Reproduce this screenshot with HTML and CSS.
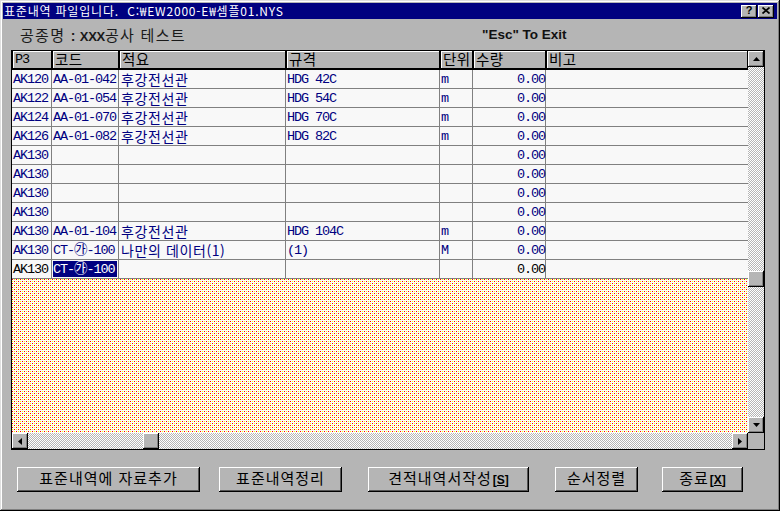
FILE: index.html
```html
<!DOCTYPE html>
<html lang="ko">
<head>
<meta charset="utf-8">
<title>표준내역</title>
<link rel="stylesheet" href="styles.css">
</head>
<body>
<div class="window">
  <div class="titlebar">
    <span class="title">표준내역 파일입니다.&nbsp;&nbsp;C:₩EW2000-E₩셈플01.NYS</span>
    <div class="tbtns">
      <span class="tbtn help">?</span>
      <span class="tbtn"><svg width="8" height="7" viewBox="0 0 8 7"><path d="M0.5 0.5L7.5 6.5M7.5 0.5L0.5 6.5" stroke="#000" stroke-width="1.7"/></svg></span>
    </div>
  </div>

  <div class="info">
    <span class="job">공종명 <b class="colon">:</b><b class="xxx">XXX</b>공사 테스트</span>
    <span class="esc">"Esc" To Exit</span>
  </div>

  <div class="grid">
    <div class="gmain">
      <div class="table">
        <div class="hdr cols">
          <div>P3</div><div class="ko">코드</div><div class="ko">적요</div><div class="ko">규격</div><div class="ko">단위</div><div class="ko">수량</div><div class="ko">비고</div>
        </div>
        <div class="row cols">
          <div>AK120</div><div>AA-01-042</div><div class="ko">후강전선관</div><div>HDG 42C</div><div>m</div><div class="num">0.00</div><div></div>
        </div>
        <div class="row cols">
          <div>AK122</div><div>AA-01-054</div><div class="ko">후강전선관</div><div>HDG 54C</div><div>m</div><div class="num">0.00</div><div></div>
        </div>
        <div class="row cols">
          <div>AK124</div><div>AA-01-070</div><div class="ko">후강전선관</div><div>HDG 70C</div><div>m</div><div class="num">0.00</div><div></div>
        </div>
        <div class="row cols">
          <div>AK126</div><div>AA-01-082</div><div class="ko">후강전선관</div><div>HDG 82C</div><div>m</div><div class="num">0.00</div><div></div>
        </div>
        <div class="row cols">
          <div>AK130</div><div></div><div></div><div></div><div></div><div class="num">0.00</div><div></div>
        </div>
        <div class="row cols">
          <div>AK130</div><div></div><div></div><div></div><div></div><div class="num">0.00</div><div></div>
        </div>
        <div class="row cols">
          <div>AK130</div><div></div><div></div><div></div><div></div><div class="num">0.00</div><div></div>
        </div>
        <div class="row cols">
          <div>AK130</div><div></div><div></div><div></div><div></div><div class="num">0.00</div><div></div>
        </div>
        <div class="row cols">
          <div>AK130</div><div>AA-01-104</div><div class="ko">후강전선관</div><div>HDG 104C</div><div>m</div><div class="num">0.00</div><div></div>
        </div>
        <div class="row cols">
          <div>AK130</div><div>CT-㉮-100</div><div class="ko">나만의 데이터(1)</div><div>(1)</div><div>M</div><div class="num">0.00</div><div></div>
        </div>
        <div class="row cols newrow">
          <div>AK130</div><div class="sel"><span>CT-㉮-100</span></div><div></div><div></div><div></div><div class="num">0.00</div><div></div>
        </div>
        <div class="fill"></div>
      </div>
      <div class="vscroll">
        <div class="sbtn"><svg width="7" height="4" viewBox="0 0 7 4"><path d="M3.5 0L7 4H0Z" fill="#000"/></svg></div>
        <div class="track vtop"></div>
        <div class="thumb"></div>
        <div class="track grow"></div>
        <div class="sbtn"><svg width="7" height="4" viewBox="0 0 7 4"><path d="M0 0H7L3.5 4Z" fill="#000"/></svg></div>
      </div>
    </div>
    <div class="gfoot">
      <div class="hscroll">
        <div class="sbtn"><svg width="4" height="7" viewBox="0 0 4 7"><path d="M0 3.5L4 0V7Z" fill="#000"/></svg></div>
        <div class="track hleft"></div>
        <div class="thumb"></div>
        <div class="track grow"></div>
        <div class="sbtn"><svg width="4" height="7" viewBox="0 0 4 7"><path d="M0 0L4 3.5L0 7Z" fill="#000"/></svg></div>
      </div>
      <div class="corner"></div>
    </div>
  </div>

  <div class="buttons">
    <div class="btn b1">표준내역에 자료추가</div>
    <div class="btn b2">표준내역정리</div>
    <div class="btn b3">견적내역서작성<b class="acc">[<u>S</u>]</b></div>
    <div class="btn b4">순서정렬</div>
    <div class="btn b5">종료<b class="acc">[<u>X</u>]</b></div>
  </div>
</div>
</body>
</html>
```

FILE: styles.css
```css
* { box-sizing: border-box; }
html, body { margin: 0; padding: 0; }
body {
  width: 780px;
  height: 511px;
  overflow: hidden;
  background: #b5b5b5;
  font-family: "Noto Sans CJK KR", sans-serif;
}

.window {
  width: 780px;
  height: 511px;
  padding: 3px;
  background: #b5b5b5;
  box-shadow: inset -1px -1px #000, inset 1px 1px #dfdfdf, inset -2px -2px #808080, inset 2px 2px #fff;
  display: flex;
  flex-direction: column;
}

/* title bar */
.titlebar {
  height: 16px;
  flex: none;
  background: #000080;
  color: #fff;
  display: flex;
  align-items: center;
  justify-content: space-between;
  padding: 0 3px 0 1px;
}
.title {
  font-size: 12px;
  line-height: 16px;
  letter-spacing: 0.8px;
  white-space: pre;
}
.tbtns { display: flex; gap: 1px; }
.tbtn {
  width: 16px;
  height: 13px;
  background: #b5b5b5;
  box-shadow: inset -1px -1px #000, inset 1px 1px #fff, inset -2px -2px #808080;
  display: flex;
  align-items: center;
  justify-content: center;
  color: #000;
  font: bold 11px/13px "Liberation Sans", sans-serif;
  padding-bottom: 1px;
}

/* info line */
.info {
  height: 31px;
  flex: none;
  display: flex;
  padding-top: 7px;
  line-height: 18px;
  color: #1a1a1a;
}
.job {
  margin-left: 17px;
  width: 462px;
  font-size: 15px;
  letter-spacing: 1.3px;
  white-space: pre;
}
.colon { font: bold 14px "Liberation Sans", sans-serif; margin: 0 3px 0 0; }
.xxx { font: bold 13px "Liberation Sans", sans-serif; letter-spacing: -0.3px; }
.esc {
  font: bold 13.5px/18px "Liberation Sans", sans-serif;
  color: #111;
}

/* grid */
.grid {
  margin-left: 8px;
  width: 754px;
  height: 400px;
  flex: none;
  border: 1px solid #000;
  display: flex;
  flex-direction: column;
}
.gmain { height: 382px; display: flex; }
.table {
  flex: 1;
  display: flex;
  flex-direction: column;
}
.cols {
  display: grid;
  grid-template-columns: 40px 67px 167px 154px 33px 73px 1fr;
}
.hdr {
  height: 19px;
  flex: none;
  background: #b5b5b5;
  border-bottom: 2px solid #000;
}
.hdr > div {
  border-right: 1px solid #000;
  box-shadow: inset 1px 0 #000, inset 2px 1px #fff;
  padding: 1px 0 0 3px;
  font: 13.5px/16px "Liberation Mono", "Noto Sans CJK KR", monospace;
  letter-spacing: -1.1px;
  color: #000;
  white-space: nowrap;
}
.hdr > div.ko {
  font: 14.5px/16px "Noto Sans CJK KR", sans-serif;
  letter-spacing: 0.5px;
  padding-top: 0;
}

.row {
  height: 19px;
  flex: none;
  background: #f8f8f8;
  border-bottom: 1px solid #808080;
}
.row > div {
  border-right: 1px solid #808080;
  color: #000080;
  font: 13.5px/16px "Liberation Mono", "Noto Sans CJK KR", monospace;
  letter-spacing: -1.1px;
  padding: 2px 0 0 1px;
  white-space: nowrap;
}
.row > div:last-child { border-right: none; }
.row > div.ko {
  font: 14px/16px "Noto Sans CJK KR", sans-serif;
  letter-spacing: 0.6px;
  padding: 1px 0 0 2px;
}
.row > div.num { text-align: right; padding-right: 0; }
.newrow > div { color: #000; }
.row > div.sel { padding: 0; }
.sel span {
  display: block;
  height: 16px;
  margin: 1px 1px 0 1px;
  padding-top: 1px;
  background: #000080;
  color: #fff;
}

.fill {
  flex: 1;
  background-color: #fcfcfc;
  background-image: url("data:image/svg+xml,%3Csvg xmlns='http://www.w3.org/2000/svg' width='4' height='4' shape-rendering='crispEdges'%3E%3Crect x='0' y='0' width='1' height='1' fill='%23ff0000'/%3E%3Crect x='2' y='0' width='1' height='1' fill='%23ffff00'/%3E%3Crect x='0' y='2' width='1' height='1' fill='%23ffff00'/%3E%3Crect x='2' y='2' width='1' height='1' fill='%23ff0000'/%3E%3C/svg%3E");
  background-size: 4px 4px;
}

/* scrollbars */
.vscroll {
  width: 16px;
  flex: none;
  display: flex;
  flex-direction: column;
}
.gfoot { height: 16px; display: flex; }
.hscroll { flex: 1; display: flex; }
.corner { width: 16px; background: #b5b5b5; }
.sbtn, .thumb {
  width: 16px;
  height: 16px;
  flex: none;
  background: #b5b5b5;
  box-shadow: inset -1px -1px #000, inset 1px 1px #fff, inset -2px -2px #808080;
  display: flex;
  align-items: center;
  justify-content: center;
}
.sbtn svg { display: block; }
.track {
  background: repeating-conic-gradient(#ffffff 0 25%, #b5b5b5 0 50%) 0 0 / 2px 2px;
}
.vtop { height: 204px; flex: none; }
.hleft { width: 115px; flex: none; }
.grow { flex: 1; }

/* bottom buttons */
.buttons {
  display: flex;
  margin-top: 17px;
  padding-left: 14px;
}
.btn {
  height: 25px;
  background: #b5b5b5;
  box-shadow: inset -1px -1px #000, inset 1px 1px #fff, inset -2px -2px #555;
  font-size: 15px;
  line-height: 21px;
  letter-spacing: 1px;
  text-align: center;
  color: #000;
  white-space: nowrap;
}
.b1 { width: 183px; }
.b2 { width: 123px; margin-left: 19px; }
.b3 { width: 161px; margin-left: 26px; }
.b4 { width: 83px; margin-left: 26px; }
.b5 { width: 81px; margin-left: 24px; }
.acc {
  font: bold 12px "Liberation Sans", sans-serif;
  letter-spacing: 0;
  margin-left: 1px;
}
```
